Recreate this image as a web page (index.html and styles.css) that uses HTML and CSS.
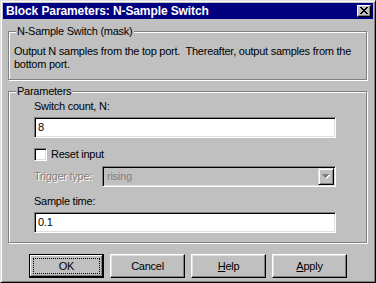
FILE: index.html
```html
<!DOCTYPE html>
<html lang="en">
	<head>
		<meta http-equiv="Content-Type" content="text/html; charset=utf-8" />
		<title>Block Parameters: N-Sample Switch</title>
		<link rel="stylesheet" href="styles.css">
	</head>
	<body>
		<div class="window">
			<div class="titlebar">
				<span class="title">Block Parameters: N-Sample Switch</span>
				<button class="close-btn">
					<svg width="8" height="7" viewBox="0 0 8 7" shape-rendering="crispEdges"><path fill="#000" d="M0 0h2v1H0zM6 0h2v1H6zM1 1h2v1H1zM5 1h2v1H5zM2 2h4v1H2zM3 3h2v1H3zM2 4h4v1H2zM1 5h2v1H1zM5 5h2v1H5zM0 6h2v1H0zM6 6h2v1H6z"/></svg>
				</button>
			</div>
			<div class="body">
				<div class="group mask">
					<div class="group-label">N-Sample Switch (mask)</div>
					<p class="desc">Output N samples from the top port.&nbsp; Thereafter, output samples from the bottom port.</p>
				</div>
				<div class="group params">
					<div class="group-label">Parameters</div>
					<div class="fields">
						<div class="field-label">Switch count, N:</div>
						<div class="edit">8</div>
						<div class="check-row">
							<span class="checkbox"></span>
							<span>Reset input</span>
						</div>
						<div class="trigger-row">
							<span class="disabled-label">Trigger type:</span>
							<div class="combo">
								<span class="combo-text">rising</span>
								<span class="combo-btn">
									<svg width="8" height="5" viewBox="0 0 8 5" shape-rendering="crispEdges"><path fill="#fff" d="M1 1h7v1H1zM2 2h5v1H2zM3 3h3v1H3zM4 4h1v1H4z"/><path fill="#808080" d="M0 0h7v1H0zM1 1h5v1H1zM2 2h3v1H2zM3 3h1v1H3z"/></svg>
								</span>
							</div>
						</div>
						<div class="field-label sample">Sample time:</div>
						<div class="edit">0.1</div>
					</div>
				</div>
				<div class="buttons">
					<button class="btn default"><span class="focus">OK</span></button>
					<button class="btn">Cancel</button>
					<button class="btn"><span><u>H</u>elp</span></button>
					<button class="btn"><span><u>A</u>pply</span></button>
				</div>
			</div>
		</div>
	</body>
</html>
```

FILE: styles.css
```css
*{
	padding: 0;
	margin: 0;
	box-sizing: border-box;
}
body{
	background: #c0c0c0;
	font-family: "Liberation Sans", Arial, sans-serif;
	font-size: 11px;
	line-height: 13px;
	letter-spacing: -0.25px;
	color: #000;
}
.window{
	width: 376px;
	height: 283px;
	background: #c0c0c0;
	border: 1px solid;
	border-color: #dfdfdf #000 #000 #dfdfdf;
	box-shadow: inset 1px 1px 0 #fff, inset -1px -1px 0 #808080;
	padding: 2px;
}
.titlebar{
	height: 16px;
	background: #000080;
	display: flex;
	align-items: center;
	justify-content: space-between;
	padding: 0 2px 0 3px;
}
.title{
	color: #fff;
	font-weight: bold;
	font-size: 12px;
	letter-spacing: -0.1px;
}
.close-btn{
	width: 14px;
	height: 12px;
	background: #c0c0c0;
	border: 1px solid;
	border-color: #fff #000 #000 #fff;
	box-shadow: inset -1px -1px 0 #808080;
	display: flex;
	align-items: center;
	justify-content: center;
	padding: 0 1px 1px 0;
}
.close-btn svg{
	display: block;
}
.body{
	padding: 0 6px 0 5px;
}
.group{
	border: 1px solid #808080;
	box-shadow: 1px 1px 0 #fff, inset 1px 1px 0 #fff;
	padding-left: 5px;
}
.group-label{
	width: fit-content;
	margin: -7px 0 0 2px;
	padding: 0 1px;
	background: #c0c0c0;
}
.mask{
	margin-top: 12px;
	padding-bottom: 8px;
}
.desc{
	margin-top: 7px;
}
.params{
	margin-top: 11px;
	padding-bottom: 9px;
}
.fields{
	margin: 0 30px 0 20px;
}
.field-label{
	margin-top: 2px;
}
.field-label.sample{
	margin-top: 8px;
}
.edit{
	margin-top: 4px;
	height: 21px;
	background: #fff;
	border: 1px solid;
	border-color: #808080 #fff #fff #808080;
	box-shadow: inset 1px 1px 0 #000, inset -1px -1px 0 #dfdfdf;
	padding: 3px 0 0 3px;
}
.check-row{
	margin-top: 10px;
	display: flex;
	align-items: center;
	gap: 4px;
	height: 13px;
}
.checkbox{
	width: 13px;
	height: 13px;
	background: #fff;
	border: 1px solid;
	border-color: #808080 #fff #fff #808080;
	box-shadow: inset 1px 1px 0 #000, inset -1px -1px 0 #dfdfdf;
}
.trigger-row{
	margin-top: 5px;
	display: flex;
	align-items: center;
}
.disabled-label{
	width: 68px;
	color: #808080;
	text-shadow: 1px 1px 0 #fff;
}
.combo{
	flex: 1;
	height: 21px;
	border: 1px solid;
	border-color: #808080 #fff #fff #808080;
	box-shadow: inset 1px 1px 0 #000, inset -1px -1px 0 #dfdfdf;
	padding: 1px;
	display: flex;
	align-items: center;
}
.combo-text{
	flex: 1;
	padding-left: 3px;
	color: #808080;
}
.combo-btn{
	width: 16px;
	height: 17px;
	background: #c0c0c0;
	border: 1px solid;
	border-color: #dfdfdf #000 #000 #dfdfdf;
	box-shadow: inset 1px 1px 0 #fff, inset -1px -1px 0 #808080;
	display: flex;
	align-items: center;
	justify-content: center;
}
.combo-btn svg{
	display: block;
}
.buttons{
	margin-top: 11px;
	padding-left: 21px;
	display: flex;
	gap: 6px;
}
.btn{
	width: 75px;
	height: 24px;
	background: #c0c0c0;
	font: inherit;
	letter-spacing: inherit;
	color: #000;
	border: 1px solid;
	border-color: #fff #000 #000 #fff;
	box-shadow: inset -1px -1px 0 #808080, inset 1px 1px 0 #dfdfdf;
	display: flex;
	align-items: center;
	justify-content: center;
}
.btn.default{
	border-color: #000;
	box-shadow: inset -1px -1px 0 #000, inset 1px 1px 0 #fff, inset -2px -2px 0 #808080;
	align-items: stretch;
}
.focus{
	flex: 1;
	margin: 3px;
	border: 1px dotted #000;
	display: flex;
	align-items: center;
	justify-content: center;
}
```
